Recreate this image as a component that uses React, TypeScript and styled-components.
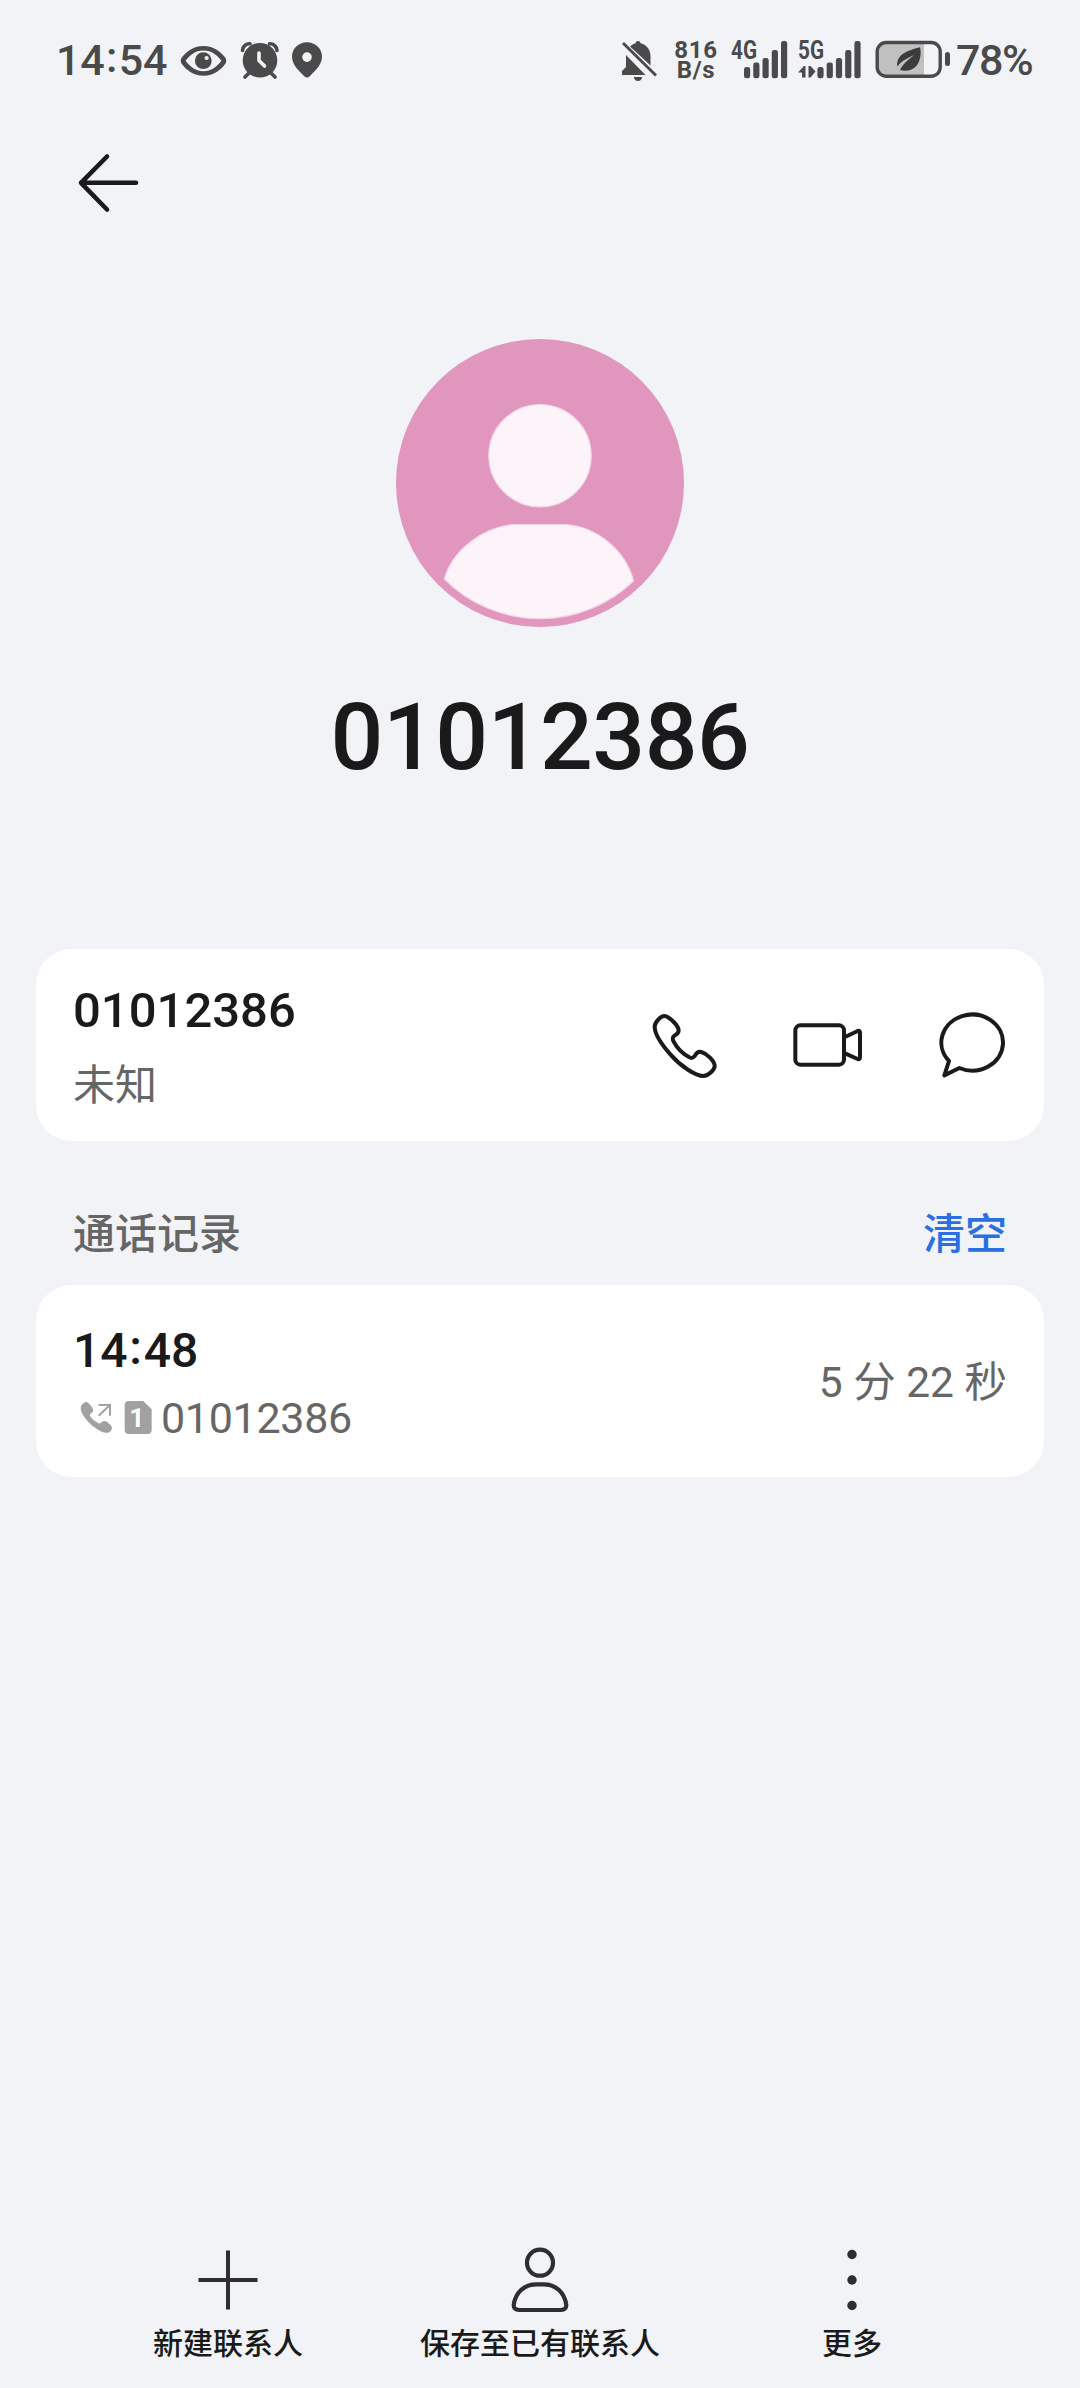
import React from 'react';
import styled, { createGlobalStyle } from 'styled-components';

const latin = `Roboto, "Noto Sans CJK SC", sans-serif`;
const cjk = `"Noto Sans CJK SC", sans-serif`;
const ink = '#1a1a1a';
const muted = '#666666';
const status = '#4a4a4a';

const GlobalStyle = createGlobalStyle`
  body { margin: 0; background: #f1f3f7; }
  * { box-sizing: border-box; }
  svg { display: block; flex: none; }
`;

const Page = styled.div`
  width: 1080px;
  height: 2388px;
  display: flex;
  flex-direction: column;
  background: #f1f3f7;
  font-family: ${latin};
  color: ${ink};
  overflow: hidden;
`;

const StatusBar = styled.header`
  height: 120px;
  padding: 0 46px 0 56px;
  display: flex;
  align-items: center;
  justify-content: space-between;
  color: ${status};
`;

const StatusGroup = styled.div`
  display: flex;
  align-items: center;
`;

const Clock = styled.div`
  width: 124px;
  font-size: 43px;
  font-weight: 500;
  line-height: 60px;
  letter-spacing: -0.1px;
  white-space: nowrap;
`;

const Colon = styled.span<{ $pad: number; $lift: number }>`
  display: inline-block;
  padding: 0 ${p => p.$pad}px;
  line-height: 1;
  margin-top: -${p => p.$lift}px;
  vertical-align: ${p => p.$lift}px;
`;

const StatusIcon = styled.svg<{ $gap?: number }>`
  margin-left: ${p => p.$gap ?? 0}px;
  fill: currentColor;
`;

const Speed = styled.div`
  width: 46px;
  margin-left: 15px;
  font-size: 24px;
  font-weight: 700;
  line-height: 20px;
  letter-spacing: 0.7px;
  text-align: center;
`;

const SignalLabel = styled.text`
  font-family: ${latin};
  font-size: 25px;
  font-weight: 700;
  fill: ${status};
`;

const Percent = styled.div`
  width: 78px;
  margin-left: 4px;
  font-size: 43px;
  font-weight: 500;
  line-height: 60px;
  letter-spacing: -1.4px;
  white-space: nowrap;
`;

const AppBar = styled.nav`
  height: 126px;
  padding-left: 76px;
  display: flex;
  align-items: center;
`;

const BareButton = styled.button`
  border: 0;
  padding: 0;
  background: none;
  color: inherit;
  font: inherit;
`;

const Profile = styled.section`
  height: 703px;
  padding-top: 93px;
  display: flex;
  flex-direction: column;
  align-items: center;
`;

const Title = styled.h1`
  margin: 51px 0 0;
  font-size: 93px;
  font-weight: 500;
  line-height: 120px;
  letter-spacing: -0.5px;
`;

const Card = styled.section`
  height: 192px;
  margin: 0 36px;
  padding: 0 37px;
  border-radius: 36px;
  background: #fff;
  display: flex;
  align-items: center;
  justify-content: space-between;
`;

const Lines = styled.div<{ $gap: number; $top: number }>`
  display: flex;
  flex-direction: column;
  gap: ${p => p.$gap}px;
  padding-top: ${p => p.$top}px;
`;

const Primary = styled.div<{ $size: number }>`
  font-size: ${p => p.$size}px;
  font-weight: 500;
  line-height: 60px;
  white-space: nowrap;
`;

const Place = styled.div`
  font-family: ${cjk};
  font-size: 42px;
  line-height: 60px;
  color: ${muted};
`;

const Actions = styled.div`
  display: flex;
  align-items: center;
  gap: 73px;
`;

const LineIcon = styled.svg`
  fill: none;
  stroke: ${ink};
  stroke-linecap: round;
  stroke-linejoin: round;
`;

const SectionHead = styled.div`
  height: 144px;
  padding: 36px 73px 0 73px;
  display: flex;
  align-items: center;
  justify-content: space-between;
  font-family: ${cjk};
  font-size: 42px;
  font-weight: 500;
  line-height: 60px;
  color: ${muted};
`;

const ClearButton = styled(BareButton)`
  color: #2b6fe3;
`;

const CallMeta = styled.div`
  height: 60px;
  padding-left: 7px;
  display: flex;
  align-items: center;
  gap: 10px;
  font-size: 43px;
  line-height: 60px;
  letter-spacing: -0.3px;
  color: ${muted};
`;

const SimDigit = styled.text`
  font-family: ${latin};
  font-size: 80px;
  font-weight: 700;
  letter-spacing: 0;
  fill: #fff;
`;

const MetaNumber = styled.span`
  margin-left: -2px;
`;

const Duration = styled.div`
  padding-top: 3px;
  font-size: 42.5px;
  line-height: 60px;
  color: ${muted};
  white-space: nowrap;
`;

const BottomBar = styled.footer`
  height: 150px;
  margin-top: auto;
  padding: 6px 72px 0;
  display: grid;
  grid-template-columns: repeat(3, 312px);
`;

const BottomItem = styled(BareButton)`
  display: flex;
  flex-direction: column;
  align-items: center;
  justify-content: flex-start;
  font-family: ${cjk};
  font-size: 30px;
  font-weight: 500;
  line-height: 42px;
  white-space: nowrap;
`;

type BarsProps = { x: number };
const Bars = ({ x }: BarsProps) => (
  <g>
    {[67, 62.5, 58, 50, 41].map((top, i) => (
      <rect key={top} x={x + i * 9.25} y={top} width="6.2" height={78.3 - top} rx="2.4" />
    ))}
  </g>
);

const bottomItems = [
  {
    label: '新建联系人',
    icon: <path d="M36 8.5v55M8.5 36h55" strokeLinecap="square" strokeWidth="4" />,
  },
  {
    label: '保存至已有联系人',
    icon: (
      <>
        <circle cx="36" cy="18.7" r="13" />
        <path d="M32 40.3H40C52 40.3 60.5 49 62.2 60.5C62.7 64 60.5 66 57 66H15C11.5 66 9.3 64 9.8 60.5C11.5 49 20 40.3 32 40.3Z" />
      </>
    ),
  },
  {
    label: '更多',
    icon: (
      <g fill="#2e2e2e" stroke="none">
        <circle cx="36" cy="10.5" r="4.7" />
        <circle cx="36" cy="36" r="4.7" />
        <circle cx="36" cy="61.5" r="4.7" />
      </g>
    ),
  },
];

export default function App() {
  return (
    <Page>
      <GlobalStyle />
      <StatusBar>
        <StatusGroup>
          <Clock>14<Colon $pad={1.4} $lift={3}>:</Colon>54</Clock>
          <StatusIcon viewBox="180 40 48 40" width="48" height="40">
            <path fillRule="evenodd" d="M203.5 46C214 46 221 52 225.2 57.5Q227.3 60.7 225.2 64C221 69.5 214 75.7 203.5 75.7C193 75.7 186 69.5 181.8 64Q179.7 60.7 181.8 57.5C186 52 193 46 203.5 46ZM203.5 50.5C195 50.5 189.5 55.5 185.6 60.8C189.5 66 195 71.2 203.5 71.2C212 71.2 217.5 66 221.4 60.8C217.5 55.5 212 50.5 203.5 50.5Z" />
            <circle cx="203.3" cy="60.7" r="8.4" />
            <circle cx="206.6" cy="58" r="2.1" fill="#f1f3f7" />
          </StatusIcon>
          <StatusIcon $gap={11} viewBox="239 40 42 40" width="42" height="40">
            <circle cx="260" cy="60.3" r="17.3" />
            <path fill="none" stroke="currentColor" strokeWidth="3.6" strokeLinecap="round" d="M242.5 50.5C242.5 46.5 246 43.5 250 43.8M277 50.5C277 46.5 273.5 43.5 269.5 43.8M249 73L245 77M271 73L275 77" />
            <path fill="none" stroke="#f1f3f7" strokeWidth="3.6" strokeLinecap="round" strokeLinejoin="round" d="M259 53V60.5L264.5 66" />
          </StatusIcon>
          <StatusIcon $gap={10} viewBox="291 40 32 40" width="32" height="40">
            <path fillRule="evenodd" d="M307 42.2C298.5 42.2 292 48.7 292 56.5C292 64 297.5 69.5 304 76Q307 79 310 76C316.5 69.5 322 64 322 56.5C322 48.7 315.5 42.2 307 42.2ZM307 52.3A4.8 4.8 0 1 1 307 61.9A4.8 4.8 0 1 1 307 52.3Z" />
          </StatusIcon>
        </StatusGroup>

        <StatusGroup>
          <StatusIcon viewBox="620 38 38 44" width="38" height="44">
            <path d="M622 75V71L626 67V55L645.5 75Z" />
            <path d="M630 46.5Q632.5 44 635.5 43.3Q635.7 40.9 638 40.9Q640.3 40.9 640.6 43.3C647 45 650.5 50 650.5 56V65.5Z" />
            <path d="M633.8 77H642.2Q641.5 81 638 81Q634.5 81 633.8 77Z" />
            <path fill="none" stroke="currentColor" strokeWidth="2.9" d="M623 43L656 75.5" />
          </StatusIcon>
          <Speed>816<br />B/s</Speed>
          <StatusIcon $gap={10} viewBox="729 30 132 60" width="132" height="60">
            <SignalLabel x="731" y="58.7" textLength="26" lengthAdjust="spacingAndGlyphs">4G</SignalLabel>
            <Bars x={744} />
            <SignalLabel x="798" y="58.7" textLength="26" lengthAdjust="spacingAndGlyphs">5G</SignalLabel>
            <path d="M805.5 66V77.5H802V72.5H798L804 66ZM808.5 66H810.5L815.5 71.5L810.5 77.5H808.5Z" />
            <Bars x={817.4} />
          </StatusIcon>
          <StatusIcon $gap={13} viewBox="874 38 78 44" width="78" height="44">
            <path fill="#c0c0c1" d="M886 43H924V76H886Q877.5 76 877.5 67V52Q877.5 43 886 43Z" />
            <rect x="877.2" y="42.5" width="63" height="33.8" rx="9" fill="none" stroke="currentColor" strokeWidth="3.4" />
            <rect x="945" y="52" width="5" height="14" rx="2.5" />
            <path fill="#3c3c3c" d="M920 47.3C909 50 896 54 897.3 66.5C902 60.5 907.5 58 914.5 55C907.5 60 902.5 64.5 900 70C910 72.5 917 68 919.5 60C921 55 921 51 920 47.3Z" />
          </StatusIcon>
          <Percent>78%</Percent>
        </StatusGroup>
      </StatusBar>

      <AppBar>
        <BareButton aria-label="返回">
          <LineIcon viewBox="0 0 66 66" width="66" height="66" strokeWidth="4.6">
            <path d="M60 32.8H5M31 6.5L5 32.8L31 59.5" />
          </LineIcon>
        </BareButton>
      </AppBar>

      <Profile>
        <svg viewBox="396 339 288 288" width="288" height="288">
          <circle cx="540" cy="483" r="144" fill="#e196bd" />
          <g fill="#fdf4f9" stroke="#f5d5e6" strokeWidth="1.2">
            <circle cx="540" cy="455.7" r="51.2" />
            <path d="M514 524.5H566C598 527 626 551 633.5 581A135 135 0 0 1 444.3 579C452 551 482 527 514 524.5Z" />
          </g>
        </svg>
        <Title>01012386</Title>
      </Profile>

      <Card>
        <Lines $gap={11} $top={3}>
          <Primary $size={49}>01012386</Primary>
          <Place>未知</Place>
        </Lines>
        <Actions>
          <BareButton aria-label="语音通话">
            <LineIcon viewBox="93 93 198 198" width="66" height="66" strokeWidth="12">
              <path d="M101 137C101 125 118 105 130 105C141 105 166 127 172 143C175 152 171 157 163 162C155 167 153 172 158 182C168 201 188 220 205 229C213 233 217 231 222 224C227 214 232 210 241 213C258 218 280 240 281 254C282 266 262 285 247 285C224 285 180 257 148 220C120 188 101 158 101 137Z" />
            </LineIcon>
          </BareButton>
          <BareButton aria-label="视频通话">
            <LineIcon viewBox="514 93 219 204" width="73" height="68" strokeWidth="12">
              <rect x="527" y="136" width="146" height="118" rx="15" />
              <path d="M676 171L714 153Q721 151 721 158V232Q721 239 714 237L676 220" />
            </LineIcon>
          </BareButton>
          <BareButton aria-label="短信">
            <LineIcon viewBox="951 93 210 204" width="70" height="68" strokeWidth="12">
              <path d="M987 243A92.5 84 0 1 1 1018 264L973 286Z" />
            </LineIcon>
          </BareButton>
        </Actions>
      </Card>

      <SectionHead>
        <span>通话记录</span>
        <ClearButton>清空</ClearButton>
      </SectionHead>

      <Card>
        <Lines $gap={7} $top={6}>
          <Primary $size={48}>14<Colon $pad={1.8} $lift={3}>:</Colon>48</Primary>
          <CallMeta>
            <svg viewBox="150 625 99 105" width="33" height="35">
              <path fill="#a1a1a1" d="M163 633C170 628 176 634 185 645C191 653 191 660 184 664C178 668 178 671 183 677C188 684 197 690 204 694C210 697 212 694 216 690C221 686 228 687 236 695C245 703 249 709 243 717C236 725 226 725 215 720C190 709 165 685 155 662C151 650 150 641 163 633Z" />
              <path fill="none" stroke="#a1a1a1" strokeWidth="6" d="M206 640H240V672M239 641L206 672" />
            </svg>
            <svg viewBox="279 625 90 105" width="30" height="35">
              <path fill="#a1a1a1" d="M297 628H340L365 653V714Q365 727 352 727H297Q284 727 284 714V641Q284 628 297 628Z" />
              <SimDigit x="321" y="707" textAnchor="middle">1</SimDigit>
            </svg>
            <MetaNumber>01012386</MetaNumber>
          </CallMeta>
        </Lines>
        <Duration>5 分 22 秒</Duration>
      </Card>

      <BottomBar>
        {bottomItems.map(item => (
          <BottomItem key={item.label}>
            <svg viewBox="0 0 72 76" width="72" height="76" fill="none" stroke="#2e2e2e" strokeWidth="4.2">
              {item.icon}
            </svg>
            {item.label}
          </BottomItem>
        ))}
      </BottomBar>
    </Page>
  );
}
